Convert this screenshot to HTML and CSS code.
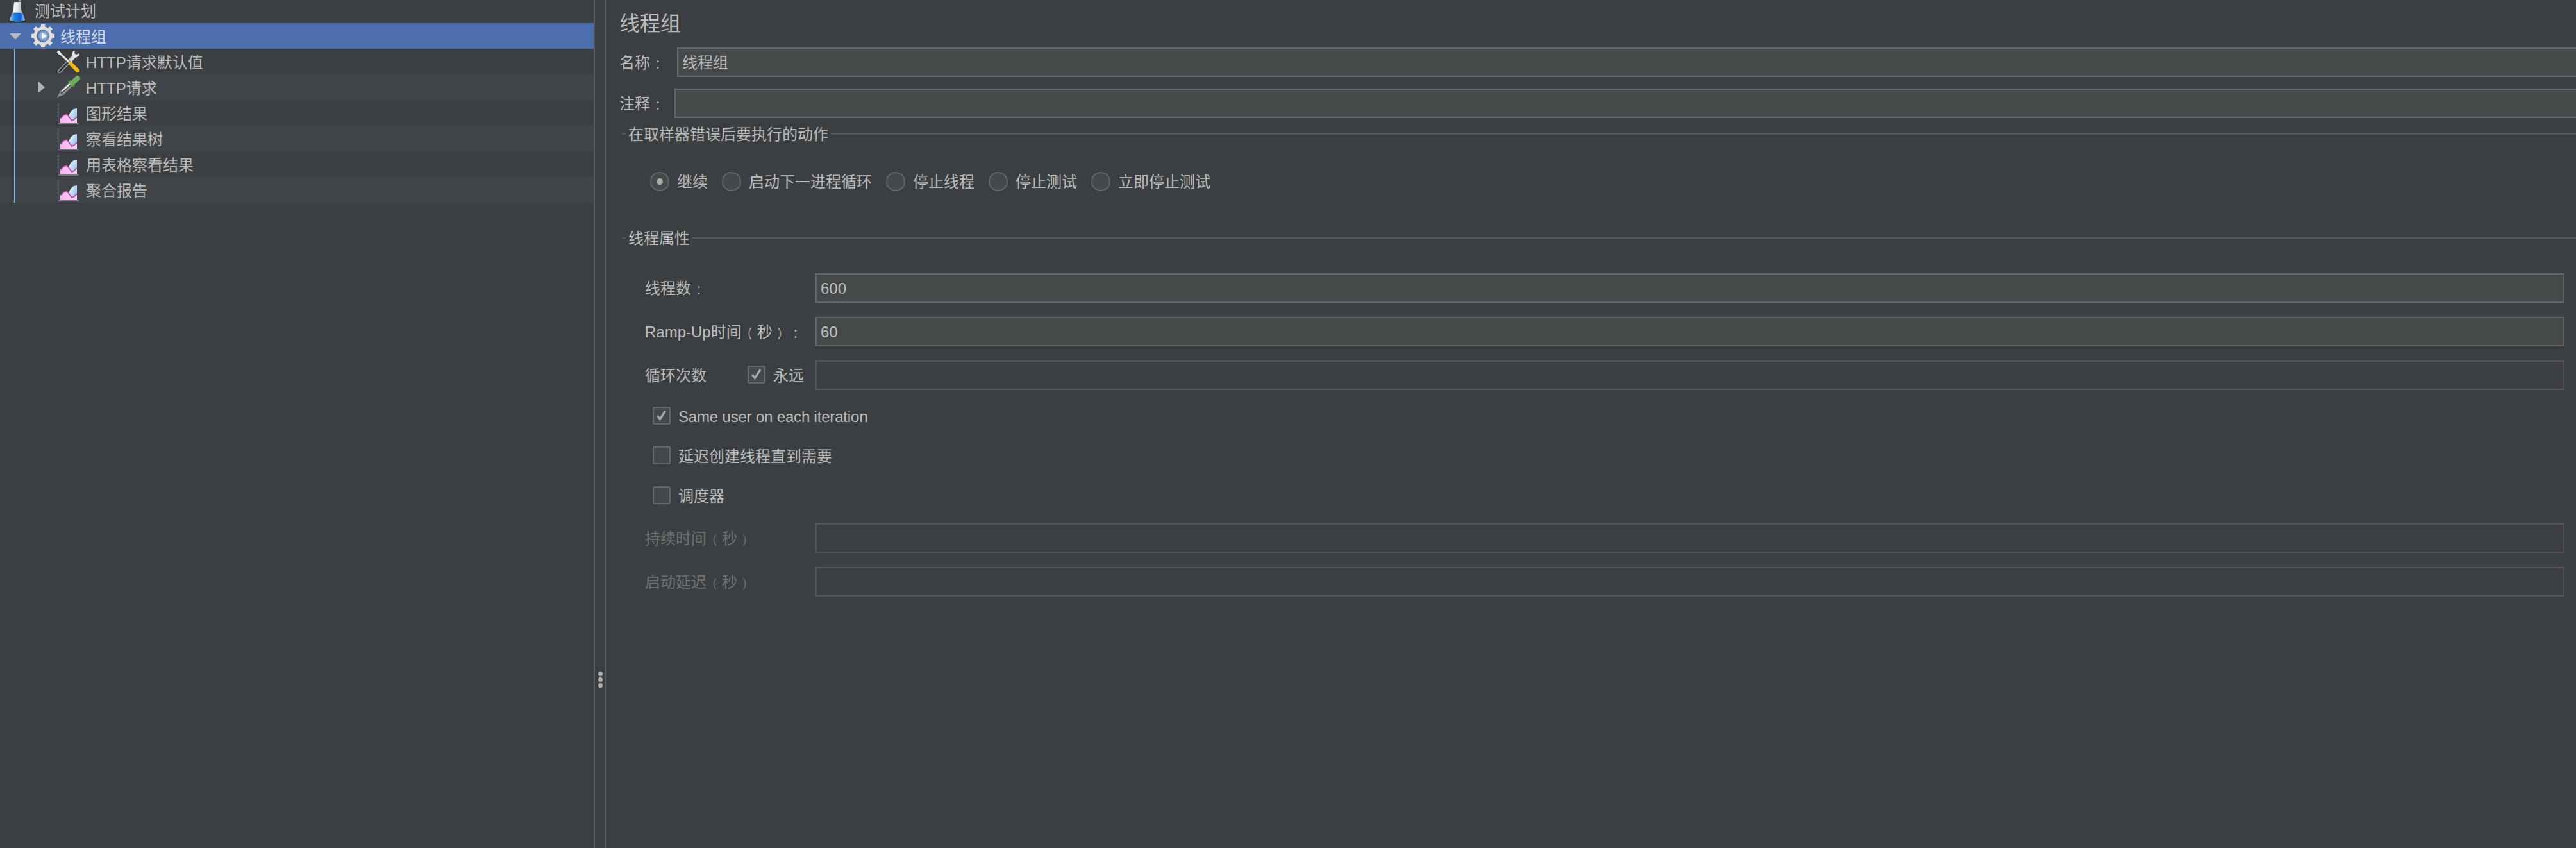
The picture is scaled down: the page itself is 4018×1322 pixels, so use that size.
FILE: index.html
```html
<!DOCTYPE html>
<html lang="zh-CN">
<head>
<meta charset="utf-8">
<title>线程组</title>
<link rel="stylesheet" href="styles.css">
</head>
<body>
<svg width="0" height="0" class="defs">
  <defs>
    <linearGradient id="sky" x1="0" y1="0" x2="1" y2="1"><stop offset="0" stop-color="#f4f9ff"/><stop offset="1" stop-color="#84b4ee"/></linearGradient>
    <linearGradient id="pink" x1="0" y1="0" x2="1" y2="0"><stop offset="0" stop-color="#f7b4f8"/><stop offset="1" stop-color="#fbd0ec"/></linearGradient>
    <linearGradient id="glass" x1="0" y1="0" x2="1" y2="0"><stop offset="0" stop-color="#8d959c"/><stop offset=".45" stop-color="#f1f4f6"/><stop offset="1" stop-color="#8a9096"/></linearGradient>
    <linearGradient id="water" x1="0" y1="0" x2="1" y2="0"><stop offset="0" stop-color="#a8d0f5"/><stop offset=".3" stop-color="#2583e4"/><stop offset=".7" stop-color="#0c62d0"/><stop offset="1" stop-color="#a8d0f5"/></linearGradient>
    <radialGradient id="orb" cx=".55" cy=".5" r=".6"><stop offset="0" stop-color="#c4d4ea"/><stop offset=".55" stop-color="#7f9fcb"/><stop offset="1" stop-color="#234c8c"/></radialGradient>
    <symbol id="chart" viewBox="0 0 40 40">
      <path d="M4 5v32" stroke="#5a5d60" stroke-width="1.6" fill="none"/>
      <path d="M4 37h32" stroke="#85878c" stroke-width="1.6" fill="none"/>
      <path d="M2 7h2M2 13h2M2 19h2M2 25h2M2 31h2" stroke="#5a5d60" stroke-width="1.5"/>
      <path d="M21 34V22l3-5 4-3 5-1v21z" fill="url(#sky)"/>
      <path d="M7 36V29l5-5 4-2 4 3 5 7 4-2 4-3v9z" fill="url(#pink)"/>
      <path d="M7 29l5-5 4-2 4 3 5 7 4-2 4-4" stroke="#bd4596" stroke-width="1.6" fill="none"/>
    </symbol>
  </defs>
</svg>
<div class="app">
  <nav class="tree">
    <div class="row root">
      <svg class="icon" viewBox="0 0 40 40"><ellipse cx="20" cy="37" rx="14" ry="2.2" fill="#25282b"/><path d="M15 7h10l1 12 6 16q-12 5-24 0l6-16z" fill="url(#glass)"/><path d="M12 25q8-3 16 0l4 10q-12 5-24 0z" fill="url(#water)"/><path d="M22 5h3" stroke="#8b9298" stroke-width="3"/><path d="M16 9l-1 13" stroke="#fff" stroke-width="2"/></svg>
      <span>测试计划</span>
    </div>
    <div class="row group selected">
      <svg class="arrow" viewBox="0 0 20 20"><path d="M1 6h18L10 16z" fill="#b4b6b8"/></svg>
      <svg class="icon" viewBox="0 0 40 40"><g fill="#dfddda"><circle cx="20" cy="20" r="14.5"/><path d="M16 8l1-6h6l1 6zM16 32l1 6h6l1-6zM8 16l-6 1v6l6 1zM32 16l6 1v6l-6 1zM9 14L5 9l4-4 5 4zM26 9l5-4 4 4-4 5zM9 26l-4 5 4 4 5-4zM26 31l5 4 4-4-4-5z"/></g><circle cx="20" cy="20" r="10" fill="url(#orb)"/><path d="M18 15l8 5-8 5z" fill="#edf2f9"/></svg>
      <span>线程组</span>
    </div>
    <div class="children">
      <div class="row leaf">
        <svg class="icon" viewBox="0 0 40 40"><path d="M6 35L28 12" stroke="#a2a4a5" stroke-width="6" stroke-linecap="round"/><path d="M6 35L24 16" stroke="#303335" stroke-width="3" stroke-linecap="round"/><path d="M22 19l7-7" stroke="#dadcdc" stroke-width="5"/><path d="M30 3q-6 1-5 8 5 6 12-1l-1-3-4 2-3-2z" fill="#e5e6e5"/><path d="M4 5L22 22" stroke="#e7e8e8" stroke-width="3"/><path d="M3 4l4 4" stroke="#eee" stroke-width="4"/><path d="M23 23L34 34" stroke="#f0b916" stroke-width="6" stroke-linecap="round"/></svg>
        <span>HTTP请求默认值</span>
      </div>
      <div class="row leaf">
        <svg class="arrow" viewBox="0 0 20 20"><path d="M5 1v18l10-9z" fill="#adafb1"/></svg>
        <svg class="icon" viewBox="0 0 40 40"><path d="M2 36L7 26 22 12l5 5L13 31z" fill="#8e9190"/><path d="M8 30L23 16" stroke="#3f4442" stroke-width="2"/><path d="M10 26L23 14" stroke="#f2f3f2" stroke-width="2"/><path d="M20 10l9 9" stroke="#4e8a44" stroke-width="4"/><path d="M26 13l8-7" stroke="#6cae5d" stroke-width="8" stroke-linecap="round"/></svg>
        <span>HTTP请求</span>
      </div>
      <div class="row leaf"><svg class="icon"><use href="#chart"/></svg><span>图形结果</span></div>
      <div class="row leaf"><svg class="icon"><use href="#chart"/></svg><span>察看结果树</span></div>
      <div class="row leaf"><svg class="icon"><use href="#chart"/></svg><span>用表格察看结果</span></div>
      <div class="row leaf"><svg class="icon"><use href="#chart"/></svg><span>聚合报告</span></div>
    </div>
  </nav>
  <div class="splitter"><i></i><i></i><i></i></div>
  <main class="panel">
    <h1>线程组</h1>
    <div class="line name"><label>名称<b class="p" lang="zh-TW">：</b></label><div class="field">线程组</div></div>
    <div class="line comment"><label>注释<b class="p" lang="zh-TW">：</b></label><div class="field"></div></div>
    <div class="legend first"><span>在取样器错误后要执行的动作</span></div>
    <div class="radios">
      <label><i class="radio on"></i>继续</label>
      <label><i class="radio"></i>启动下一进程循环</label>
      <label><i class="radio"></i>停止线程</label>
      <label><i class="radio"></i>停止测试</label>
      <label><i class="radio"></i>立即停止测试</label>
    </div>
    <div class="legend"><span>线程属性</span></div>
    <div class="form">
      <div class="prop"><label>线程数<b class="p" lang="zh-TW">：</b></label><div class="field">600</div></div>
      <div class="prop"><label>Ramp-Up时间<b class="p open" lang="zh-TW">（</b>秒<b class="p close" lang="zh-TW">）</b><b class="p" lang="zh-TW">：</b></label><div class="field">60</div></div>
      <div class="prop"><label class="loop">循环次数<span class="check"><svg class="box" viewBox="0 0 28 28"><path d="M6 14l5 6L21 5" /></svg>永远</span></label><div class="field off"></div></div>
    </div>
    <div class="checks">
      <div class="check latin"><svg class="box" viewBox="0 0 28 28"><path d="M6 14l5 6L21 5" /></svg><span>Same user on each iteration</span></div>
      <div class="check"><i class="box"></i>延迟创建线程直到需要</div>
      <div class="check"><i class="box"></i>调度器</div>
    </div>
    <div class="form schedule">
      <div class="prop"><label>持续时间<b class="p open" lang="zh-TW">（</b>秒<b class="p close" lang="zh-TW">）</b></label><div class="field off"></div></div>
      <div class="prop"><label>启动延迟<b class="p open" lang="zh-TW">（</b>秒<b class="p close" lang="zh-TW">）</b></label><div class="field off"></div></div>
    </div>
  </main>
</div>
</body>
</html>
```
FILE: styles.css
```css
* { box-sizing: border-box; }
body {
  margin: 0;
  background: #3c3f41;
  color: #bbbbbb;
  font: 24px/40px "Liberation Sans", "Noto Sans CJK SC", sans-serif;
  white-space: nowrap;
}
.defs { position: absolute; }
.app { display: flex; height: 1322px; overflow: hidden; }

.tree { width: 926px; flex: none; }
.row { display: flex; align-items: center; height: 40px; }
.row span { margin-left: 7px; padding-top: 3px; }
.icon { width: 40px; height: 40px; flex: none; }
.arrow { width: 20px; height: 20px; flex: none; }
.root { height: 36px; padding-left: 7px; }
.root .icon { margin-top: -4px; }
.root span { margin-top: -4px; }
.selected { background: #4b6eaf; color: #d4dcea; }
.group { padding-left: 14px; }
.group .icon { margin-left: 13px; }
.children {
  background: linear-gradient(#7cbcf4, #7cbcf4) 22px 0 / 2px 100% no-repeat;
}
.leaf { padding-left: 87px; }
.leaf .arrow { margin: 0 12px 0 -32px; }
.leaf:nth-child(even) { background: rgba(255, 255, 255, .028); }

.splitter {
  width: 20px;
  flex: none;
  border: solid #555759;
  border-width: 0 2px;
  padding-top: 1047px;
  display: flex;
  flex-direction: column;
  align-items: center;
  gap: 2px;
}
.splitter i { width: 7px; height: 7px; border-radius: 50%; background: #afb1b3; }

.panel { flex: 1; min-width: 0; }
h1 { margin: 0; padding: 17px 0 0 20px; height: 74px; font-size: 32px; font-weight: 400; line-height: 40px; }
.line { display: flex; align-items: center; height: 46px; padding-left: 20px; }
.line label { width: 90px; padding-top: 2px; }
.comment { margin-top: 18px; }
.line.comment label { width: 86px; }
.line .field { flex: 1; border-right: 0; }
.field {
  height: 46px;
  border: 2px solid #646667;
  background: #45494a;
  padding: 1px 0 0 6px;
  line-height: 42px;
}
.field.off { background: none; border-color: #535557; }
.p {
  display: inline-block;
  width: 24px;
  font: 19px/20px "Noto Sans CJK TC", sans-serif;
  text-align: center;
  vertical-align: -2px;
}
.open { margin: 0 5px 0 -5px; }
.close { margin: 0 -5px 0 5px; }

.legend { display: flex; align-items: center; gap: 4px; height: 40px; padding-left: 24px; }
.legend::before, .legend::after { content: ""; height: 2px; width: 6px; background: #555759; }
.legend::after { flex: 1; }
.legend span { padding-top: 2px; }
.legend.first { margin-top: 5px; }
.radios { display: flex; gap: 22px; height: 122px; padding: 34px 0 0 68px; }
.radios label { display: flex; align-items: center; gap: 12px; height: 40px; padding-top: 1px; }
.radio { width: 30px; height: 30px; margin-top: -1px; border: 2px solid #646667; border-radius: 50%; background: #43494a; }
.radio.on { background: radial-gradient(circle, #a9abac 4.5px, #43494a 5.5px); }

.form { display: flex; flex-direction: column; gap: 22px; padding: 35px 18px 0 60px; }
.prop { display: flex; align-items: center; }
.prop label { width: 266px; padding-top: 2px; }
.prop .field { flex: 1; }
.loop { display: flex; gap: 64px; }
.check { display: flex; align-items: center; gap: 12px; }
.box {
  width: 28px;
  height: 28px;
  flex: none;
  border: 2px solid #646667;
  border-radius: 3px;
  background: #43494a;
}
.box path { fill: none; stroke: #a5a7a8; stroke-width: 4; }
.loop .box { margin-top: -4px; }
.checks { display: flex; flex-direction: column; gap: 22px; padding: 20px 0 0 72px; }
.checks .check { height: 40px; padding-top: 3px; }
.checks .box { margin-top: -3px; }
.latin { letter-spacing: -.18px; }
.schedule { padding-top: 24px; color: #6f7274; }
```
